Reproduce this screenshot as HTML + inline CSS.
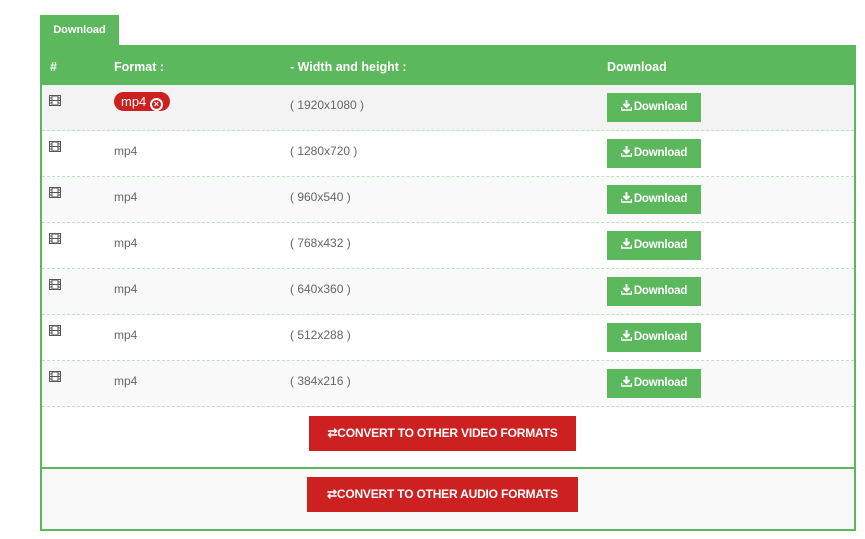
<!DOCTYPE html>
<html><head><meta charset="utf-8"><style>
*{margin:0;padding:0;box-sizing:border-box}
body{width:865px;height:539px;background:#fff;font-family:"Liberation Sans",sans-serif;position:relative;overflow:hidden}
.a{position:absolute}
.tab{left:40px;top:15px;width:79px;height:31px;background:#5cb85c;color:#fff;font-size:11px;font-weight:bold;line-height:31px;text-align:center}
.box{left:40px;top:45px;width:816px;height:486px;border:2px solid #5cb85c;border-top:none}
.hd{left:40px;top:45px;width:816px;height:40px;background:#5cb85c;color:#fff;font-size:12.5px;font-weight:bold}
.hd span{position:absolute;top:15px}
.row{left:42px;width:812px;height:46px;border-bottom:1px dashed #b9e3b9;font-size:12px;color:#666}
.row .c{position:absolute;top:13px}
.ic{position:absolute;left:7px;top:10px}
.btn{position:absolute;left:565px;top:8px;width:94px;height:29px;background:#5cb85c;color:#fff;font-size:11.5px;font-weight:bold;line-height:29px;text-align:center;letter-spacing:-0.2px}
.btn svg{vertical-align:-1px;margin-right:2px}
.red{background:#cd2021;color:#fff;font-weight:bold;font-size:12px;text-align:center;line-height:35px;letter-spacing:-0.2px}
.pill{background:#cd2021;color:#fff;border-radius:10px;padding:2px 7px;font-size:13px}
</style></head><body>
<svg width="0" height="0" style="position:absolute"><defs>
<symbol id="film" viewBox="0 0 12 11"><rect x="0.5" y="0.5" width="11" height="10" fill="#fff" stroke="#555"/><rect x="3" y="1" width="6" height="9" fill="#fff" stroke="#555"/><line x1="3" y1="5.5" x2="9" y2="5.5" stroke="#555"/><path d="M1 3h2M1 5.5h2M1 8h2M9 3h2M9 5.5h2M9 8h2" stroke="#555"/></symbol>
<symbol id="dl" viewBox="0 0 11 11"><path d="M5.5 0v6.5M2.5 4l3 3 3-3" stroke="#fff" stroke-width="2" fill="none"/><path d="M0.5 7v3h10V7" stroke="#fff" stroke-width="1.6" fill="none"/></symbol>
</defs></svg>
<div class="a tab">Download</div>
<div class="a box"></div>
<div class="a hd"><span style="left:10px">#</span><span style="left:74px">Format :</span><span style="left:250px">- Width and height :</span><span style="left:567px">Download</span></div>

<div class="a row" style="top:85px;background:#f3f3f3"><svg class="ic" width="12" height="11"><use href="#film"/></svg><div class="c" style="left:72px;top:9px"><span class="pill">mp4 <b style="display:inline-block;width:13px;height:13px;border:2px solid #fff;border-radius:50%;font-size:9px;line-height:9px;text-align:center;vertical-align:-1px">×</b></span></div><div class="c" style="left:248px">( 1920x1080 )</div><div class="btn"><svg width="11" height="11"><use href="#dl"/></svg>Download</div></div>
<div class="a row" style="top:131px;background:#fff"><svg class="ic" width="12" height="11"><use href="#film"/></svg><div class="c" style="left:72px">mp4</div><div class="c" style="left:248px">( 1280x720 )</div><div class="btn"><svg width="11" height="11"><use href="#dl"/></svg>Download</div></div>
<div class="a row" style="top:177px;background:#f9f9f9"><svg class="ic" width="12" height="11"><use href="#film"/></svg><div class="c" style="left:72px">mp4</div><div class="c" style="left:248px">( 960x540 )</div><div class="btn"><svg width="11" height="11"><use href="#dl"/></svg>Download</div></div>
<div class="a row" style="top:223px;background:#fff"><svg class="ic" width="12" height="11"><use href="#film"/></svg><div class="c" style="left:72px">mp4</div><div class="c" style="left:248px">( 768x432 )</div><div class="btn"><svg width="11" height="11"><use href="#dl"/></svg>Download</div></div>
<div class="a row" style="top:269px;background:#f9f9f9"><svg class="ic" width="12" height="11"><use href="#film"/></svg><div class="c" style="left:72px">mp4</div><div class="c" style="left:248px">( 640x360 )</div><div class="btn"><svg width="11" height="11"><use href="#dl"/></svg>Download</div></div>
<div class="a row" style="top:315px;background:#fff"><svg class="ic" width="12" height="11"><use href="#film"/></svg><div class="c" style="left:72px">mp4</div><div class="c" style="left:248px">( 512x288 )</div><div class="btn"><svg width="11" height="11"><use href="#dl"/></svg>Download</div></div>
<div class="a row" style="top:361px;background:#f9f9f9"><svg class="ic" width="12" height="11"><use href="#film"/></svg><div class="c" style="left:72px">mp4</div><div class="c" style="left:248px">( 384x216 )</div><div class="btn"><svg width="11" height="11"><use href="#dl"/></svg>Download</div></div>

<div class="a" style="left:42px;top:467px;width:812px;height:2px;background:#5cb85c"></div>
<div class="a" style="left:42px;top:469px;width:812px;height:60px;background:#f9f9f9"></div>
<div class="a red" style="left:309px;top:416px;width:267px;height:35px">⇄CONVERT TO OTHER VIDEO FORMATS</div>
<div class="a red" style="left:307px;top:477px;width:271px;height:35px">⇄CONVERT TO OTHER AUDIO FORMATS</div>
</body></html>
